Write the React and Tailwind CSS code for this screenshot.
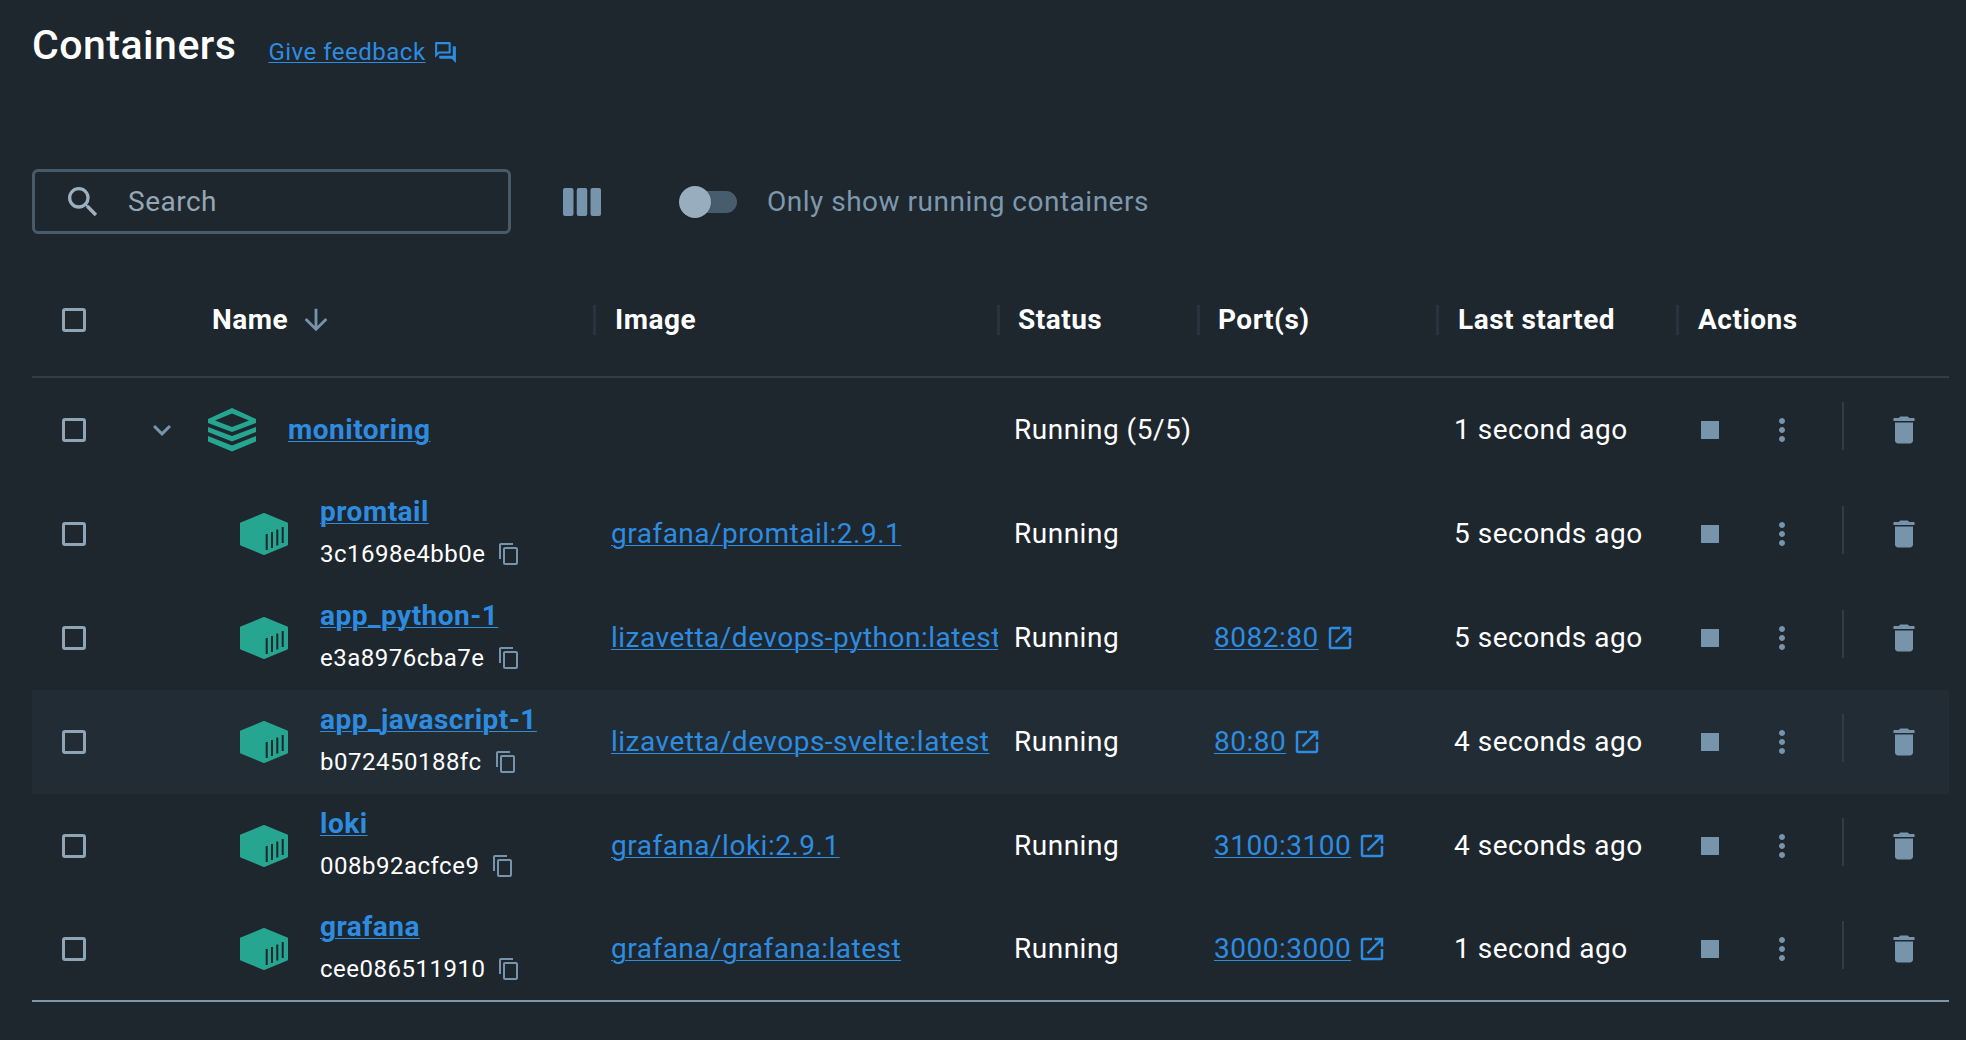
import React from 'react';
import {
  MdSearch,
  MdArrowDownward,
  MdContentCopy,
  MdOutlineOpenInNew,
  MdDelete,
  MdStop,
  MdMoreVert,
  MdExpandMore,
  MdOutlineForum,
} from 'react-icons/md';

const gridClass = "grid grid-cols-[562px_404px_200px_239px_240px_272px]";
const linkClass = "text-[#2e8ce0] underline underline-offset-2 decoration-1";

const containers = [
  { name: 'promtail', id: '3c1698e4bb0e', image: 'grafana/promtail:2.9.1', port: '', started: '5 seconds ago' },
  { name: 'app_python-1', id: 'e3a8976cba7e', image: 'lizavetta/devops-python:latest', port: '8082:80', started: '5 seconds ago' },
  { name: 'app_javascript-1', id: 'b072450188fc', image: 'lizavetta/devops-svelte:latest', port: '80:80', started: '4 seconds ago', active: true },
  { name: 'loki', id: '008b92acfce9', image: 'grafana/loki:2.9.1', port: '3100:3100', started: '4 seconds ago' },
  { name: 'grafana', id: 'cee086511910', image: 'grafana/grafana:latest', port: '3000:3000', started: '1 second ago', last: true },
];

function Checkbox() {
  return <div className="w-6 h-6 rounded-[3px] border-[3px] border-[#8ea5b8] shrink-0" />;
}

function HeadCell({ children, wide }) {
  return (
    <div className={`flex items-center -ml-px ${wide ? 'gap-[19px]' : 'gap-[18px]'}`}>
      <div className="w-[3px] h-[30px] bg-[#27343f]" />
      <span className="font-bold text-[28px]">{children}</span>
    </div>
  );
}

function ColumnsIcon() {
  return (
    <svg width="38" height="28" viewBox="0 0 38 28" fill="#7794ad" className="shrink-0">
      <rect x="0" width="10.500" height="28" rx="2" />
      <rect x="13.750" width="10.500" height="28" rx="2" />
      <rect x="27.500" width="10.500" height="28" rx="2" />
    </svg>
  );
}

function StackIcon() {
  return (
    <svg width="48" height="44" viewBox="0 0 48 44" className="shrink-0">
      <path
        fillRule="evenodd"
        fill="#26a690"
        d="M24 0 48 11v4L24 24 0 15v-4ZM24 5.500 7 12.500 24 19l17-6.500Z"
      />
      <path fill="#26a690" d="M0 19l24 9 24-9v5L24 33.500 0 24ZM0 28l24 9.500 24-9.500v5.500L24 43.500 0 33.500Z" />
    </svg>
  );
}

function ContainerIcon() {
  return (
    <svg width="48" height="42" viewBox="0 0 48 42" className="shrink-0">
      <path
        fill="#26a690"
        stroke="#26a690"
        strokeWidth="2"
        strokeLinejoin="round"
        d="M24 1 47 10.500v21L24 41 1 31.500v-21Z"
      />
      <path stroke="#1e262e" strokeWidth="2" d="M26.700 21v16M32 19v16M37.300 16.500v16M42.700 14v16" />
    </svg>
  );
}

function Actions() {
  return (
    <div className="flex items-center text-[#7794ad]">
      <div className="w-16 ml-px flex justify-center"><MdStop size={36} /></div>
      <div className="w-16 ml-2 flex justify-center"><MdMoreVert size={36} /></div>
      <div className="w-[2px] h-12 mb-2 ml-[28px] bg-[#323c45]" />
      <div className="w-16 ml-[28px] flex justify-center"><MdDelete size={36} /></div>
    </div>
  );
}

function ContainerRow({ row }) {
  return (
    <div className={`${gridClass} ${row.last ? 'h-[102px]' : 'h-[104px]'} items-center ${row.active ? 'bg-[#212c34]' : ''}`}>
      <div className="flex items-center">
        <div className="ml-[30px]"><Checkbox /></div>
        <div className="ml-[154px]"><ContainerIcon /></div>
        <div className="ml-[32px] flex flex-col pb-[5px]">
          <a className={`${linkClass} font-bold text-[28px] leading-[38px]`}>{row.name}</a>
          <div className="flex items-center gap-[12px] mt-[7px] text-[24px] leading-[32px]">
            {row.id}
            <MdContentCopy size={24} className="text-[#7794ad]" />
          </div>
        </div>
      </div>
      <div className="pl-[17px] overflow-hidden whitespace-nowrap text-[28px]">
        {/* long image names get cut at the column edge */}
        <a className={linkClass}>{row.image}</a>
      </div>
      <div className="pl-4 text-[28px]">Running</div>
      <div className="pl-4 text-[28px] flex items-center gap-[6px]">
        {row.port && <a className={linkClass}>{row.port}</a>}
        {row.port && <MdOutlineOpenInNew size={30} className="text-[#2e8ce0]" />}
      </div>
      <div className="pl-[17px] text-[28px]">{row.started}</div>
      <Actions />
    </div>
  );
}

export default function App() {
  return (
    <div className="h-[1040px] overflow-hidden bg-[#1e262e] text-white pl-8 pr-[17px] tracking-[0.5px]" style={{ fontFamily: 'Roboto, sans-serif' }}>
      <div className="h-[92px] flex items-center gap-8">
        <h1 className="font-medium text-[41px]">Containers</h1>
        <div className="flex items-center gap-[7px] mt-3 text-[#2e8ce0]">
          <a className="text-[24px] underline underline-offset-2 decoration-1">Give feedback</a>
          <MdOutlineForum size={25} />
        </div>
      </div>

      <div className="mt-[77px] h-[65px] flex items-center">
        <div className="w-[479px] h-[65px] rounded-md border-[3px] border-[#475b6b] flex items-center">
          <MdSearch size={40} className="ml-[28px] text-[#9db0be]" />
          <span className="ml-[25px] text-[28px] text-[#93a7b5]">Search</span>
        </div>
        <div className="ml-[52px]"><ColumnsIcon /></div>
        <div className="ml-[82px] relative w-[54px] h-[22px] rounded-full bg-[#475d6e]">
          <div className="absolute -left-[4px] -top-[5px] w-8 h-8 rounded-full bg-[#98aebf] shadow" />
        </div>
        <span className="ml-[30px] text-[28px] text-[#7d98ad]">Only show running containers</span>
      </div>

      <div className={`${gridClass} h-[114px] mt-[30px] items-center border-b-2 border-[#343d45]`}>
        <div className="flex items-center">
          <div className="ml-[30px]"><Checkbox /></div>
          <span className="ml-[126px] font-bold text-[28px]">Name</span>
          <MdArrowDownward size={34} className="ml-[11px] text-[#7794ad]" />
        </div>
        <HeadCell wide>Image</HeadCell>
        <HeadCell>Status</HeadCell>
        <HeadCell>Port(s)</HeadCell>
        <HeadCell wide>Last started</HeadCell>
        <HeadCell wide>Actions</HeadCell>
      </div>

      <div className={`${gridClass} h-[104px] items-center`}>
        <div className="flex items-center">
          <div className="ml-[30px]"><Checkbox /></div>
          <MdExpandMore size={36} className="ml-[58px] text-[#7794ad]" />
          <div className="ml-[28px]"><StackIcon /></div>
          <a className={`${linkClass} ml-[32px] font-bold text-[28px]`}>monitoring</a>
        </div>
        <div />
        <div className="pl-4 text-[28px]">Running (5/5)</div>
        <div />
        <div className="pl-[17px] text-[28px]">1 second ago</div>
        <Actions />
      </div>

      {containers.map((row) => (
        <ContainerRow key={row.id} row={row} />
      ))}

      <div className="border-t-2 border-[#7d98ad]" />
    </div>
  );
}
